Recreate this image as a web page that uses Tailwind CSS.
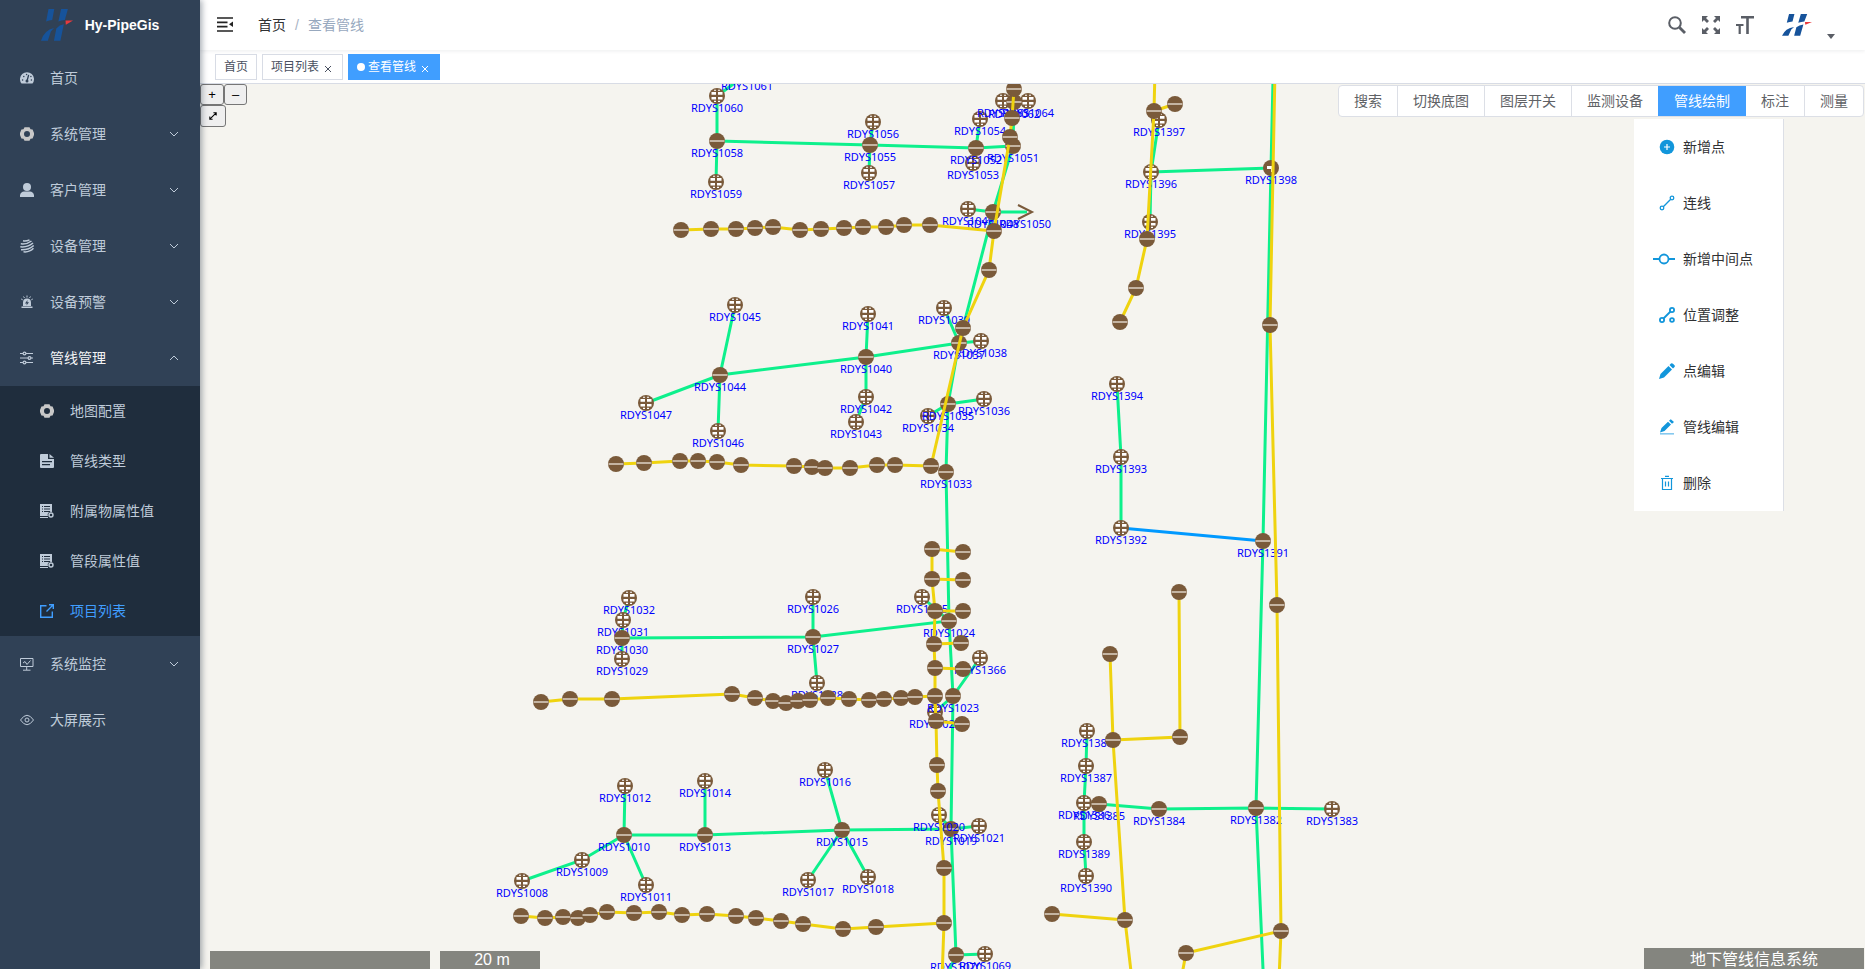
<!DOCTYPE html>
<html lang="zh-CN">
<head>
    <meta charset="UTF-8">
    <meta name="viewport" content="width=device-width, initial-scale=1.0">
    <title>Hy-PipeGis</title>
    <script src="https://cdn.jsdelivr.net/npm/@tailwindcss/browser@4"></script>
</head>
<body class="flex h-screen overflow-hidden bg-white font-['Liberation_Sans','Noto_Sans_CJK_SC',sans-serif] text-sm text-[#303133]">

    <!-- shared symbols -->
    <svg class="hidden">
        <symbol id="logo" viewBox="0 0 94 94" preserveAspectRatio="none">
            <path fill="#16539b" d="M22 0H39L33 32Q24 33 15 37ZM59 0H79L70 32Q60 33 51 37ZM0 93Q10 62 38 56L29 66 20 93ZM45 57Q54 47 67 45L57 93H38Z"/>
            <path fill="#e8393c" d="M72 34L94 34 73 46Z"/>
        </symbol>
        <symbol id="down" viewBox="0 0 12 12"><path d="M2 4l4 4 4-4" fill="none" stroke="currentColor"/></symbol>
        <symbol id="gear" viewBox="0 0 14 14">
            <path fill="#c8c8c8" fill-rule="evenodd" d="M4.500.300 9.500.300 10.500 2.200 12.600 2.500 14 6 14 8 12.600 11.500 10.500 11.800 9.500 13.700 4.500 13.700 3.500 11.800 1.400 11.500 0 8 0 6 1.400 2.500 3.500 2.200ZM7 4a3 3 0 1 0 0 6 3 3 0 0 0 0-6Z"/>
        </symbol>
        <symbol id="sheet" viewBox="0 0 14 14">
            <path fill="currentColor" fill-rule="evenodd" d="M0 0H12V8a3 3 0 0 0-4 4H0ZM2 2v1h1V2ZM4 2v1h6V2ZM2 4.500v1h1v-1ZM4 4.500v1h6v-1ZM2 7v1h1V7ZM4 7v1h6V7Z"/>
            <path d="M0 13.500H8" stroke="currentColor"/>
            <circle cx="11" cy="11" r="2" fill="none" stroke="currentColor" stroke-width="1.400"/>
        </symbol>
    </svg>

    <aside class="relative z-20 w-[200px] shrink-0 bg-[#304156] text-[#bfcbd9] shadow-[2px_0_6px_rgba(0,21,41,0.35)]">
        <a href="#" class="flex h-[50px] items-center justify-center gap-3 text-white font-bold">
            <svg class="h-8 w-8"><use href="#logo"/></svg>
            <span>Hy-PipeGis</span>
        </a>
        <nav>
            <a href="#" class="flex h-14 items-center gap-4 px-5">
                <svg class="h-3.5 w-3.5" viewBox="0 0 14 14">
                    <path fill="currentColor" d="M1.500 12.500A7 7 0 1 1 12.500 12.500Z"/>
                    <path stroke="#304156" stroke-width="1.300" stroke-linecap="round" d="M7 10 8.500 4.500M2.500 9h.2M11.300 9h.2M3.700 5.500h.2M6.500 3.500h.2M10.800 5.500h.2"/>
                    <circle cx="7" cy="10" r="1.500" fill="#304156"/>
                </svg>
                <span>首页</span>
            </a>
            <a href="#" class="flex h-14 items-center gap-4 px-5">
                <svg class="h-3.5 w-3.5"><use href="#gear"/></svg>
                <span class="grow">系统管理</span>
                <svg class="h-3 w-3"><use href="#down"/></svg>
            </a>
            <a href="#" class="flex h-14 items-center gap-4 px-5">
                <svg class="h-3.5 w-3.5" viewBox="0 0 14 14" fill="currentColor"><circle cx="7" cy="4" r="4"/><path d="M0 14V12Q1 8.500 4 8.500H10Q13 8.500 14 12V14Z"/></svg>
                <span class="grow">客户管理</span>
                <svg class="h-3 w-3"><use href="#down"/></svg>
            </a>
            <a href="#" class="flex h-14 items-center gap-4 px-5">
                <svg class="h-3.5 w-3.5" viewBox="0 0 14 14" fill="none" stroke="currentColor" stroke-width="1.500">
                    <path d="M3 1.800Q6 2.500 9.500.800M.800 4.800Q7 5.500 11.500 2M.300 7.800Q8 8.500 13 4M1 10.700Q9 11 13.700 6.500M3.500 12.800Q9.500 13.500 13.500 9.300"/>
                </svg>
                <span class="grow">设备管理</span>
                <svg class="h-3 w-3"><use href="#down"/></svg>
            </a>
            <a href="#" class="flex h-14 items-center gap-4 px-5">
                <svg class="h-3.5 w-3.5" viewBox="0 0 14 14">
                    <path fill="currentColor" d="M3 11V7.500a4 4 0 0 1 8 0V11ZM1.500 11.500h11V13h-11Z"/>
                    <path stroke="currentColor" d="M7 .500V2.500M3.500 1.500l1 1.500M10.500 1.500l-1 1.500M1.200 4l1.500.800M12.800 4l-1.500.800"/>
                    <path fill="#304156" d="M7.500 5 5 8.500H6.800L6.500 10.500 9 7.300H7.300Z"/>
                </svg>
                <span class="grow">设备预警</span>
                <svg class="h-3 w-3"><use href="#down"/></svg>
            </a>
            <a href="#" class="flex h-14 items-center gap-4 px-5 text-[#f4f4f5]">
                <svg class="h-3.5 w-3.5 text-[#bfcbd9]" viewBox="0 0 14 14" fill="none" stroke="currentColor" stroke-width="1.200">
                    <path d="M0 2.500H3M6 2.500H13M0 7H8M11 7H13M0 11.500H3M6 11.500H13"/>
                    <circle cx="4.500" cy="2.500" r="1.400"/><circle cx="9.500" cy="7" r="1.400"/><circle cx="4.500" cy="11.500" r="1.400"/>
                </svg>
                <span class="grow">管线管理</span>
                <svg class="h-3 w-3 rotate-180 text-[#bfcbd9]"><use href="#down"/></svg>
            </a>
            <div class="bg-[#1f2d3d]">
                <a href="#" class="flex h-[50px] items-center gap-4 px-10">
                    <svg class="h-3.5 w-3.5"><use href="#gear"/></svg>
                    <span>地图配置</span>
                </a>
                <a href="#" class="flex h-[50px] items-center gap-4 px-10">
                    <svg class="h-3.5 w-3.5" viewBox="0 0 14 14"><path fill="currentColor" fill-rule="evenodd" d="M1 0H8V5H14V13Q14 14 13 14H1Q0 14 0 13V1Q0 0 1 0ZM2 7V8.200H12V7ZM2 10V11.200H10V10Z"/><path fill="currentColor" d="M9.500 0 14 3.800H9.500Z"/></svg>
                    <span>管线类型</span>
                </a>
                <a href="#" class="flex h-[50px] items-center gap-4 pl-10">
                    <svg class="h-3.5 w-3.5"><use href="#sheet"/></svg>
                    <span>附属物属性值</span>
                </a>
                <a href="#" class="flex h-[50px] items-center gap-4 pl-10">
                    <svg class="h-3.5 w-3.5"><use href="#sheet"/></svg>
                    <span>管段属性值</span>
                </a>
                <a href="#" class="flex h-[50px] items-center gap-4 px-10 text-[#409eff]">
                    <svg class="h-3.5 w-3.5" viewBox="0 0 14 14" fill="none" stroke="currentColor" stroke-width="1.400"><path d="M6.500 1.700H.700V13.300H12.300V7.500M6.500 7.500 13 1M9 .700H13.300V5"/></svg>
                    <span>项目列表</span>
                </a>
            </div>
            <a href="#" class="flex h-14 items-center gap-4 px-5">
                <svg class="h-3.5 w-3.5" viewBox="0 0 14 14" fill="none" stroke="currentColor"><path d="M.500 1.500H13V9.500H.500ZM6.700 9.500V13M3 13.200H10.500M3 6 5 4.500 7 7.500 10.500 3.500"/></svg>
                <span class="grow">系统监控</span>
                <svg class="h-3 w-3"><use href="#down"/></svg>
            </a>
            <a href="#" class="flex h-14 items-center gap-4 px-5">
                <svg class="h-3.5 w-3.5" viewBox="0 0 14 14" fill="none" stroke="currentColor"><path d="M.500 7Q7-2.500 13.500 7 7 16.500.500 7Z"/><circle cx="7" cy="7" r="2"/></svg>
                <span>大屏展示</span>
            </a>
        </nav>
    </aside>

    <div class="flex min-w-0 grow flex-col">
        <header class="relative z-10 flex h-[50px] shrink-0 items-center pl-4 pr-[30px] shadow-[0_1px_4px_rgba(0,21,41,0.08)]">
            <button type="button" aria-label="折叠菜单">
                <svg class="h-4 w-[18px]" viewBox="0 0 18 16"><path d="M1 1H17M1 5.300H11.500M1 9.600H11.500M1 14H17" stroke="#222" stroke-width="1.700"/><path d="M17 4.500V10L13 7.200Z" fill="#222"/></svg>
            </button>
            <nav class="ml-6 flex items-center gap-[9px]">
                <a href="#">首页</a>
                <span class="text-[#a8b3c4]">/</span>
                <span class="text-[#97a8be]">查看管线</span>
            </nav>
            <div class="ml-auto flex items-center gap-4 text-[#5a5e66]">
                <button type="button" aria-label="搜索">
                    <svg class="h-[18px] w-[18px]" viewBox="0 0 18 18" fill="none" stroke="currentColor"><circle cx="7" cy="7" r="5.800" stroke-width="2"/><path d="M11.500 11.500 17 17" stroke-width="2.800"/></svg>
                </button>
                <button type="button" aria-label="全屏">
                    <svg class="h-[18px] w-[18px]" viewBox="0 0 18 18"><path fill="currentColor" d="M0 0H6L4 2 7 5 5 7 2 4 0 6ZM18 0V6L16 4 13 7 11 5 14 2 12 0ZM0 18V12L2 14 5 11 7 13 4 16 6 18ZM18 18H12L14 16 11 13 13 11 16 14 18 12Z"/></svg>
                </button>
                <button type="button" aria-label="字号">
                    <svg class="h-[18px] w-[18px]" viewBox="0 0 18 18" fill="none" stroke="currentColor"><path d="M5 1.300H18M11.500 1V18" stroke-width="2.600"/><path d="M0 9H7.500M3.700 9V18" stroke-width="2.200"/></svg>
                </button>
                <button type="button" aria-label="账户" class="ml-3 flex items-end gap-[15px]">
                    <svg class="h-[22px] w-[30px]"><use href="#logo"/></svg>
                    <svg class="-mb-1 h-2 w-2" viewBox="0 0 8 8"><path fill="currentColor" d="M0 2H8L4 7Z"/></svg>
                </button>
            </div>
        </header>

        <div class="flex h-[34px] shrink-0 items-center gap-[5px] border-b border-[#d8dce5] pl-[15px] text-xs text-[#495060]">
            <a href="#" class="flex h-[26px] items-center border border-[#d8dce5] px-2">首页</a>
            <a href="#" class="flex h-[26px] items-center gap-[3px] border border-[#d8dce5] px-2">项目列表
                <svg class="mt-1 h-3 w-3" viewBox="0 0 12 12"><path d="M3 3 9 9M9 3 3 9" stroke="currentColor"/></svg>
            </a>
            <a href="#" class="flex h-[26px] items-center gap-[3px] bg-[#409eff] px-[9px] text-white"><i class="h-2 w-2 rounded-full bg-white"></i>查看管线
                <svg class="mt-1 h-3 w-3" viewBox="0 0 12 12"><path d="M3 3 9 9M9 3 3 9" stroke="currentColor"/></svg>
            </a>
        </div>

        <main class="relative min-h-0 grow overflow-hidden bg-[#f5f4ef]">
            <svg class="absolute inset-0 h-full w-full" role="img" aria-label="管线图">
                <defs>
                    <g id="well">
                        <circle r="8" fill="#7a5a3a"/>
                        <path d="M-5.500-4H-1V-1.200H-5.500ZM1-4H5.500V-1.200H1ZM-5.500 1H-1V3.500H-5.500ZM1 1H5.500V3.500H1ZM-3-6.200H-1V-5.200H-3ZM1-6.200H3V-5.200H1ZM-3 4.800H-1V6H-3ZM1 4.800H3V6H1Z" fill="#fff"/>
                    </g>
                    <g id="joint">
                        <circle r="8" fill="#7a5a3a"/>
                        <path d="M-7.500 0H7.500" stroke="#c4b4a2" stroke-width="2"/>
                    </g>
                    <g id="valve">
                        <circle r="8" fill="#7a5a3a"/>
                        <path d="M-4-2H3V4H0V1H-4Z" fill="#fff"/>
                    </g>
                    <g id="outlet"><path d="M-7-7 7 0-7 7" fill="none" stroke="#7a5a3a" stroke-width="2"/></g>
                </defs>
                <g id="map" transform="translate(-200 -84)"></g>
            </svg>

            <div class="absolute left-0 top-0 text-[13px] leading-none text-black">
                <div class="flex">
                    <button type="button" class="h-[21px] w-6 rounded-[3px] border border-[#767676] bg-[#efefef]">+</button>
                    <button type="button" class="h-[21px] w-[23px] rounded-[3px] border border-[#767676] bg-[#efefef]">–</button>
                </div>
                <button type="button" aria-label="全图" class="flex h-[22px] w-[26px] items-center justify-center rounded-[3px] border border-[#767676] bg-[#efefef]">
                    <svg class="h-2 w-2" viewBox="0 0 10 10"><path d="M1 9 9 1M5.500 1H9V4.500M1 5.500V9H4.500" fill="none" stroke="#000" stroke-width="1.300"/></svg>
                </button>
            </div>

            <div class="absolute right-px top-px flex h-8 overflow-hidden rounded border border-[#dcdfe6] bg-white text-[#606266]">
                <button type="button" class="border-r border-[#dcdfe6] px-[15px]">搜索</button>
                <button type="button" class="border-r border-[#dcdfe6] px-[15px]">切换底图</button>
                <button type="button" class="border-r border-[#dcdfe6] px-[15px]">图层开关</button>
                <button type="button" class="px-[15px]">监测设备</button>
                <button type="button" class="-my-px bg-[#409eff] px-4 text-white">管线绘制</button>
                <button type="button" class="border-r border-[#dcdfe6] px-[15px]">标注</button>
                <button type="button" class="px-[15px]">测量</button>
            </div>

            <div class="absolute right-[81px] top-[35px] w-[150px] border-r border-[#dcdfe6] bg-white text-[#1296db]">
                <button type="button" class="flex h-14 w-full items-center gap-2 pl-[19px]">
                    <svg class="h-4 w-[22px]" viewBox="0 0 22 16"><circle cx="14" cy="8" r="7.300" fill="currentColor"/><path d="M14 5V11M11 8H17" stroke="#fff" stroke-width="1.200"/></svg>
                    <span class="text-[#303133]">新增点</span>
                </button>
                <button type="button" class="flex h-14 w-full items-center gap-2 pl-[19px]">
                    <svg class="h-4 w-[22px]" viewBox="0 0 22 16" fill="none" stroke="currentColor" stroke-width="1.300"><circle cx="9" cy="13" r="1.800"/><circle cx="19" cy="3" r="1.800"/><path d="M10.300 11.700 17.700 4.300"/></svg>
                    <span class="text-[#303133]">连线</span>
                </button>
                <button type="button" class="flex h-14 w-full items-center gap-2 pl-[19px]">
                    <svg class="h-4 w-[22px]" viewBox="0 0 22 16" fill="none" stroke="currentColor" stroke-width="1.800"><circle cx="11" cy="8" r="4.500"/><path d="M0 8H6.500M15.500 8H22"/></svg>
                    <span class="text-[#303133]">新增中间点</span>
                </button>
                <button type="button" class="flex h-14 w-full items-center gap-2 pl-[19px]">
                    <svg class="h-4 w-[22px]" viewBox="0 0 22 16" fill="none" stroke="currentColor" stroke-width="1.800"><circle cx="9" cy="13" r="2.100"/><circle cx="19" cy="3" r="2.100"/><circle cx="19" cy="13" r="1.900"/><path d="M10.500 11.500 17.500 4.500"/></svg>
                    <span class="text-[#303133]">位置调整</span>
                </button>
                <button type="button" class="flex h-14 w-full items-center gap-2 pl-[19px]">
                    <svg class="h-4 w-[22px]" viewBox="0 0 22 16"><path fill="currentColor" d="M6 16 7.500 11 15.500 3 19 6.500 11 14.500ZM16.500 2 18 .500Q19-.300 20 .700L21.500 2.200Q22.300 3 21.500 4L20 5.500Z"/></svg>
                    <span class="text-[#303133]">点编辑</span>
                </button>
                <button type="button" class="flex h-14 w-full items-center gap-2 pl-[19px]">
                    <svg class="h-4 w-[22px]" viewBox="0 0 22 16"><path fill="currentColor" d="M7 13.500 8.500 9 15 2.800 18 5.500 11.500 12ZM16 1.800 17.800.200 21 3 19 4.700Z"/><path d="M7 14.800H21" stroke="#86c9ef" stroke-width="1.600"/></svg>
                    <span class="text-[#303133]">管线编辑</span>
                </button>
                <button type="button" class="flex h-14 w-full items-center gap-2 pl-[19px]">
                    <svg class="h-4 w-[22px]" viewBox="0 0 22 16" fill="none" stroke="currentColor" stroke-width="1.200"><path d="M8 3.500H20M12 1.300H16M9.500 3.500V14.500H18.500V3.500M12.500 6.500V11.500M15.500 6.500V11.500"/></svg>
                    <span class="text-[#303133]">删除</span>
                </button>
            </div>

            <div class="absolute bottom-0 left-2.5 flex gap-2.5 text-base leading-[18px] text-white">
                <div class="h-[18px] w-[220px] bg-[#84857f]"></div>
                <div class="h-[18px] w-[100px] bg-[#84857f] pl-1 text-center">20 m</div>
            </div>
            <div class="absolute bottom-0 right-px h-[21px] w-[220px] bg-[#84857f] text-center text-base leading-6 text-white">地下管线信息系统</div>
        </main>
    </div>

    <script>
        // rain water wells: number, x, y, symbol
        const wells = [
            [1061, 747, 74, 'well'], [1060, 717, 96, 'well'], [1058, 717, 141, 'joint'], [1059, 716, 182, 'well'],
            [1056, 873, 122, 'well'], [1055, 870, 145, 'joint'], [1057, 869, 173, 'well'],
            [1054, 980, 119, 'well'], [1053, 973, 163, 'well'], [1052, 976, 148, 'joint'], [1051, 1013, 146, 'joint'],
            [1063, 1003, 101, 'well'], [1064, 1028, 101, 'well'], [1062, 1014, 102, 'joint'],
            [1049, 968, 209, 'well'], [1048, 993, 212, 'joint'], [1050, 1025, 212, 'outlet'],
            [1045, 735, 305, 'well'], [1044, 720, 375, 'joint'], [1047, 646, 403, 'well'], [1046, 718, 431, 'well'],
            [1041, 868, 314, 'well'], [1040, 866, 357, 'joint'], [1042, 866, 397, 'well'], [1043, 856, 422, 'well'],
            [1039, 944, 308, 'well'], [1038, 981, 341, 'well'], [1037, 959, 343, 'joint'],
            [1034, 928, 416, 'well'], [1035, 948, 404, 'joint'], [1036, 984, 399, 'well'], [1033, 946, 472, 'joint'],
            [1032, 629, 598, 'well'], [1031, 623, 620, 'well'], [1030, 622, 638, 'joint'], [1029, 622, 659, 'well'],
            [1026, 813, 597, 'well'], [1027, 813, 637, 'joint'], [1028, 817, 683, 'well'],
            [1025, 922, 597, 'well'], [1024, 949, 621, 'joint'], [1366, 980, 658, 'well'],
            [1022, 935, 712, 'well'], [1023, 953, 696, 'joint'],
            [1012, 625, 786, 'well'], [1014, 705, 781, 'well'], [1016, 825, 770, 'well'],
            [1010, 624, 835, 'joint'], [1013, 705, 835, 'joint'], [1015, 842, 830, 'joint'],
            [1009, 582, 860, 'well'], [1008, 522, 881, 'well'], [1011, 646, 885, 'well'],
            [1017, 808, 880, 'well'], [1018, 868, 877, 'well'],
            [1019, 951, 829, 'joint'], [1020, 939, 815, 'well'], [1021, 979, 826, 'well'],
            [1070, 956, 955, 'joint'], [1069, 985, 954, 'well'],
            [1397, 1159, 120, 'well'], [1396, 1151, 172, 'well'], [1398, 1271, 168, 'valve'], [1395, 1150, 222, 'well'],
            [1394, 1117, 384, 'well'], [1393, 1121, 457, 'well'], [1392, 1121, 528, 'well'], [1391, 1263, 541, 'joint'],
            [1388, 1087, 731, 'well'], [1387, 1086, 766, 'well'], [1386, 1084, 803, 'well'], [1385, 1099, 804, 'joint'],
            [1384, 1159, 809, 'joint'], [1382, 1256, 808, 'joint'], [1383, 1332, 809, 'well'],
            [1389, 1084, 842, 'well'], [1390, 1086, 876, 'well']
        ];

        const rainLines = [
            '747,74 717,96 717,141 716,182', '717,141 870,145 976,148 1013,146', '873,122 870,145 869,173',
            '980,119 976,148 973,163', '1003,101 1028,101', '1014,102 1013,146 993,212 959,343 948,404 946,472 949,621 953,696 951,829 956,955 950,969',
            '968,209 993,212 1027,212', '735,305 720,375 718,431', '646,403 720,375 866,357 959,343 981,341',
            '868,314 866,357 866,397 856,422', '944,308 959,343', '928,416 948,404 984,399',
            '629,598 623,620 622,638 622,659', '622,638 813,637 949,621 922,597', '813,597 813,637 817,683',
            '980,658 953,696 935,712', '625,786 624,835 646,885', '522,881 582,860 624,835 705,835 842,830 951,829 979,826',
            '705,781 705,835', '825,770 842,830 868,877', '842,830 808,880', '939,815 951,829', '956,955 985,954',
            '1159,120 1151,172 1150,222', '1151,172 1271,168', '1273,80 1271,168 1263,541 1256,808 1263,969',
            '1117,384 1121,457 1121,528', '1087,731 1086,766 1084,803 1084,842 1086,876', '1084,803 1099,804 1159,809 1256,808 1332,809'
        ];

        const sewerLines = [
            '681,230 711,229 736,229 755,228 773,227 800,230 821,229 844,228 863,227 886,227 904,225 930,225 994,231',
            '1014,89 1012,118 1010,137 994,231 989,270 963,328 931,466',
            '616,464 644,463 680,461 698,461 717,462 741,465 794,466 812,467 825,468 850,468 877,465 895,465 931,466',
            '932,549 932,579 935,611 934,644 935,668 935,696 936,721 937,765 938,791 944,868 944,923 942,980',
            '932,549 963,552', '932,579 963,580', '935,611 963,611', '934,644 961,643', '935,668 963,669', '936,721 962,724',
            '541,702 570,699 612,699 732,694 755,698 773,701 786,703 798,701 810,700 828,698 849,699 869,700 884,699 901,698 915,697 935,696',
            '521,916 545,918 563,917 578,918 590,915 607,912 634,913 659,912 682,915 707,914 736,916 756,918 781,921 803,924 843,929 876,927 944,923',
            '1155,70 1154,111 1147,239 1136,288 1120,322', '1154,111 1175,104',
            '1275,70 1270,325 1277,605 1281,931 1279,980',
            '1179,592 1180,737 1113,740', '1110,654 1113,740 1125,920 1132,980', '1052,914 1125,920',
            '1281,931 1186,953 1181,980'
        ];

        const line = (points, color) => `<polyline points="${points}" fill="none" stroke="${color}" stroke-width="3"/>`;

        let out = rainLines.map(p => line(p, '#0df08c')).join('');
        out += line('1121,528 1263,541', '#0099ff');
        wells.forEach(([no, x, y, type]) => {
            out += `<use href="#${type}" x="${x}" y="${y}"/>`;
            out += `<text x="${x}" y="${y + 16}" text-anchor="middle" fill="#0000ff" class="font-['Noto_Sans',sans-serif] text-[11px]">RDYS${no}</text>`;
        });
        out += sewerLines.map(p => line(p, '#efd30f')).join('');
        const joints = new Set(sewerLines.flatMap(p => p.split(' ')));
        joints.forEach(p => {
            const [x, y] = p.split(',');
            if (y > 75 && y < 975) out += `<use href="#joint" x="${x}" y="${y}"/>`;
        });
        document.getElementById('map').innerHTML = out;
    </script>
</body>
</html>
